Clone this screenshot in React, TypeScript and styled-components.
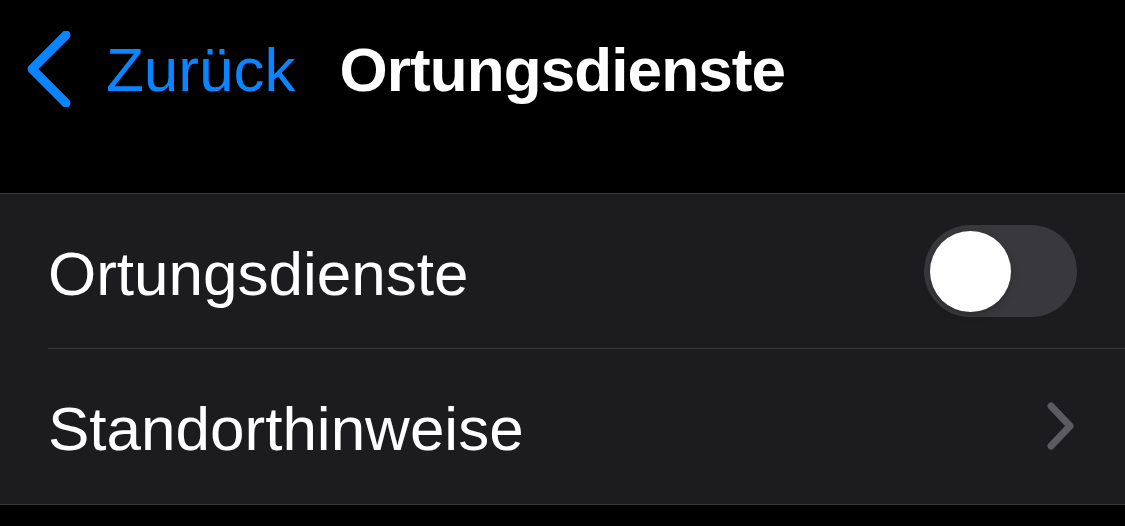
import React from "react";
import styled, { createGlobalStyle } from "styled-components";

const Global = createGlobalStyle`
  html, body {
    margin: 0;
    padding: 0;
    background: #000;
  }
  body {
    font-family: "Liberation Sans", Arial, sans-serif;
    -webkit-font-smoothing: antialiased;
  }
`;

const Page = styled.div`
  width: 1125px;
  height: 526px;
  background: #000;
  overflow: hidden;
`;

const NavBar = styled.div`
  height: 193px;
  box-sizing: border-box;
  padding-bottom: 55px;
  display: flex;
  align-items: center;
`;

const BackButton = styled.div`
  display: flex;
  align-items: center;
  color: #0a84ff;
  font-size: 62px;
  padding-left: 24px;
`;

const BackLabel = styled.span`
  margin-left: 30px;
`;

const Title = styled.h1`
  margin: 0 0 0 44px;
  color: #fff;
  font-size: 62px;
  font-weight: 700;
  letter-spacing: -0.9px;
`;

const Group = styled.div`
  background: #1c1c1e;
  border-top: 1px solid #38383a;
  border-bottom: 1px solid #38383a;
`;

const Row = styled.div`
  padding-left: 48px;
`;

const RowInner = styled.div<{ $divider?: boolean }>`
  height: ${(p) => (p.$divider ? 154 : 155)}px;
  display: flex;
  align-items: center;
  justify-content: space-between;
  padding-right: 48px;
  border-bottom: ${(p) => (p.$divider ? "1px solid #38383a" : "none")};
`;

const Label = styled.span`
  color: #fff;
  font-size: 62px;
  padding-top: 4px;
`;

const Toggle = styled.div`
  width: 153px;
  height: 92px;
  border-radius: 46px;
  background: #39393d;
  display: flex;
  align-items: center;
  padding-left: 6px;
  box-sizing: border-box;
`;

const Knob = styled.div`
  width: 81px;
  height: 81px;
  border-radius: 50%;
  background: #fff;
  box-shadow: 0 3px 8px rgba(0, 0, 0, 0.15), 0 3px 1px rgba(0, 0, 0, 0.06);
`;

const App = () => {
  return (
    <Page>
      <Global />
      <NavBar>
        <BackButton>
          <svg width="52" height="76" viewBox="0 0 52 76">
            <polyline
              points="42,4 8,38 42,72"
              fill="none"
              stroke="#0a84ff"
              strokeWidth="9"
              strokeLinecap="round"
              strokeLinejoin="round"
            />
          </svg>
          <BackLabel>Zurück</BackLabel>
        </BackButton>
        <Title>Ortungsdienste</Title>
      </NavBar>
      <Group>
        <Row>
          <RowInner $divider>
            <Label>Ortungsdienste</Label>
            <Toggle>
              <Knob />
            </Toggle>
          </RowInner>
        </Row>
        <Row>
          <RowInner>
            <Label>Standorthinweise</Label>
            <svg width="34" height="50" viewBox="0 0 34 50">
              <polyline
                points="8,4 27,24 8,44"
                fill="none"
                stroke="#5b5b60"
                strokeWidth="7"
                strokeLinecap="round"
                strokeLinejoin="round"
              />
            </svg>
          </RowInner>
        </Row>
      </Group>
    </Page>
  );
};

export default App;
